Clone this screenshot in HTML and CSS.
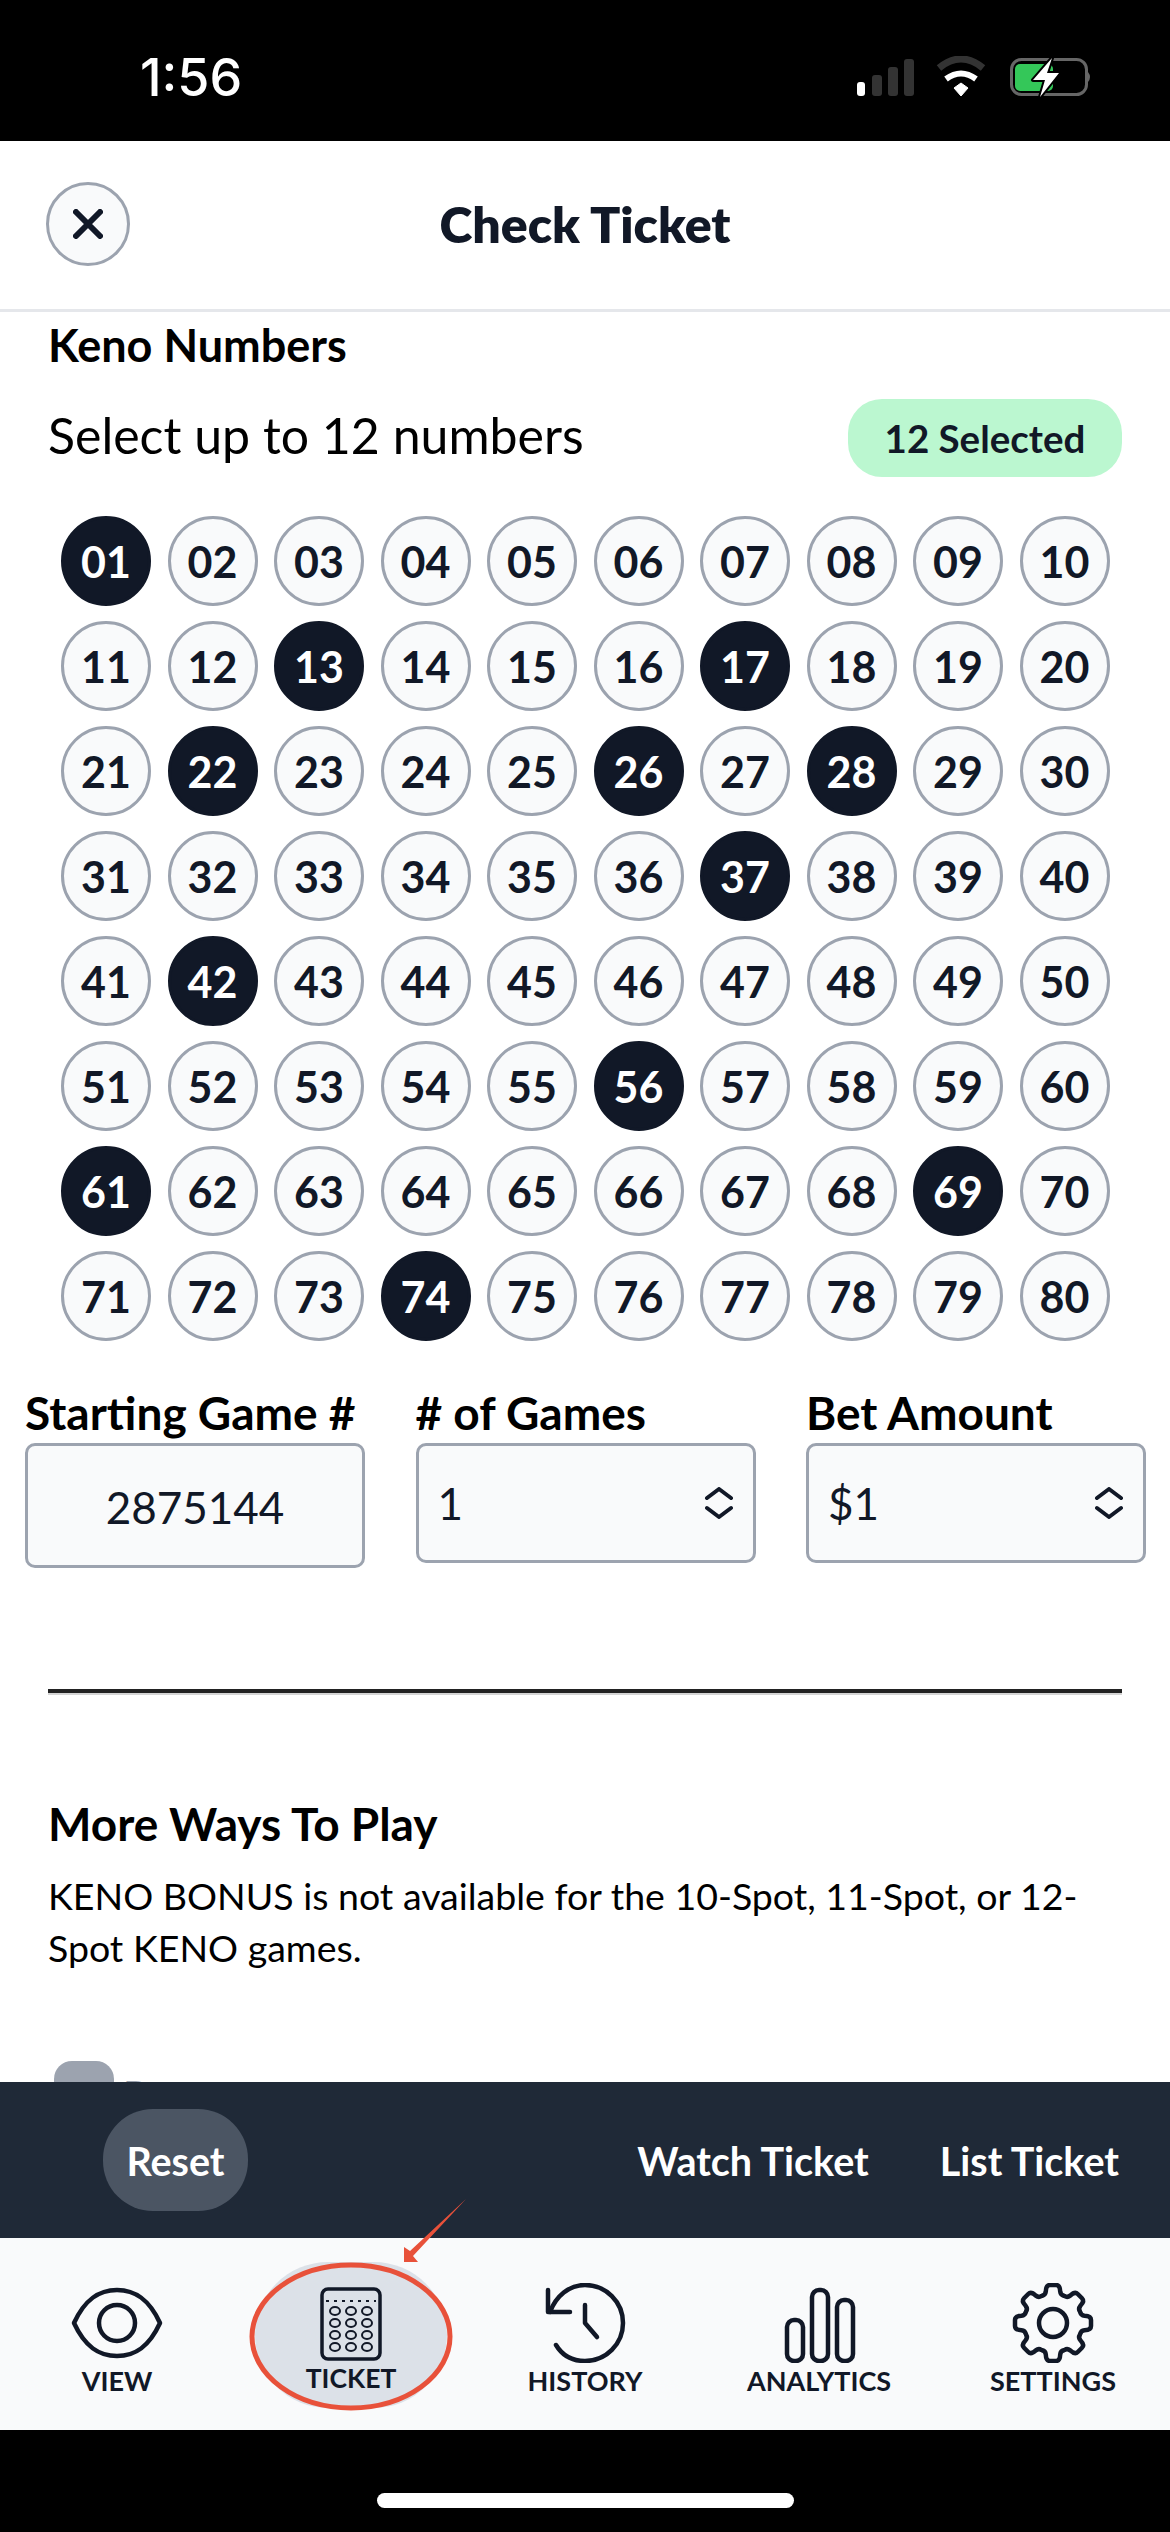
FILE: index.html
```html
<!DOCTYPE html>
<html lang="en">
<head>
  <meta charset="UTF-8" />
  <meta name="viewport" content="width=device-width, initial-scale=1.0"/>
  <title>Check Ticket</title>
  <link rel="stylesheet" href="styles.css">
</head>
<body>
  <div class="pagina">
    <!-- Status bar -->
    <div class="status">
      <span class="hora">1:56</span>
      <svg class="status-icones" width="240" height="44" viewBox="0 0 240 44">
        <rect x="2" y="26" width="8" height="14" rx="3" fill="#fff"/>
        <rect x="17" y="19" width="10" height="21" rx="3" fill="#333"/>
        <rect x="33" y="11" width="10" height="29" rx="3" fill="#333"/>
        <rect x="49" y="3" width="10" height="37" rx="3" fill="#333"/>
        <path d="M84 12Q106 -6 128 12" fill="none" stroke="#333" stroke-width="7"/>
        <path d="M91 23Q106 12 121 23" fill="none" stroke="#fff" stroke-width="6"/>
        <path d="M99 32L106 27L113 32L106 40Z" fill="#fff" stroke="#fff" stroke-linejoin="round"/>
        <rect x="156.500" y="3.500" width="75" height="35" rx="10" fill="none" stroke="#666" stroke-width="3"/>
        <rect x="160" y="8" width="38" height="27" rx="5" fill="#34c759"/>
        <path d="M233 16Q237 21 233 26Z" fill="#666"/>
        <path d="M197 2L178 24H190L185 41L204 17H192Z" fill="#fff" stroke="#000" stroke-width="4" paint-order="stroke" stroke-linejoin="round"/>
      </svg>
    </div>

    <!-- Header -->
    <div class="topo">
      <div class="fechar">
        <svg width="30" height="30" viewBox="0 0 30 30"><path d="M3 3L27 27M27 3L3 27" stroke="#111827" stroke-width="6" stroke-linecap="round"/></svg>
      </div>
      <div class="titulo">Check Ticket</div>
    </div>

    <!-- Scroll area -->
    <div class="conteudo">
      <div class="secao">Keno Numbers</div>
      <div class="linha-selecao">
        <span class="dica">Select up to 12 numbers</span>
        <span class="selo">12 Selected</span>
      </div>

      <div class="numeros">
        <div class="num on">01</div><div class="num">02</div><div class="num">03</div><div class="num">04</div><div class="num">05</div><div class="num">06</div><div class="num">07</div><div class="num">08</div><div class="num">09</div><div class="num">10</div>
        <div class="num">11</div><div class="num">12</div><div class="num on">13</div><div class="num">14</div><div class="num">15</div><div class="num">16</div><div class="num on">17</div><div class="num">18</div><div class="num">19</div><div class="num">20</div>
        <div class="num">21</div><div class="num on">22</div><div class="num">23</div><div class="num">24</div><div class="num">25</div><div class="num on">26</div><div class="num">27</div><div class="num on">28</div><div class="num">29</div><div class="num">30</div>
        <div class="num">31</div><div class="num">32</div><div class="num">33</div><div class="num">34</div><div class="num">35</div><div class="num">36</div><div class="num on">37</div><div class="num">38</div><div class="num">39</div><div class="num">40</div>
        <div class="num">41</div><div class="num on">42</div><div class="num">43</div><div class="num">44</div><div class="num">45</div><div class="num">46</div><div class="num">47</div><div class="num">48</div><div class="num">49</div><div class="num">50</div>
        <div class="num">51</div><div class="num">52</div><div class="num">53</div><div class="num">54</div><div class="num">55</div><div class="num on">56</div><div class="num">57</div><div class="num">58</div><div class="num">59</div><div class="num">60</div>
        <div class="num on">61</div><div class="num">62</div><div class="num">63</div><div class="num">64</div><div class="num">65</div><div class="num">66</div><div class="num">67</div><div class="num">68</div><div class="num on">69</div><div class="num">70</div>
        <div class="num">71</div><div class="num">72</div><div class="num">73</div><div class="num on">74</div><div class="num">75</div><div class="num">76</div><div class="num">77</div><div class="num">78</div><div class="num">79</div><div class="num">80</div>
      </div>

      <div class="campos">
        <div class="campo">
          <div class="rotulo">Starting Game #</div>
          <div class="caixa caixa-jogo">2875144</div>
        </div>
        <div class="campo">
          <div class="rotulo"># of Games</div>
          <div class="caixa caixa-select">
            <span>1</span>
            <svg width="30" height="32" viewBox="0 0 30 32"><path d="M3 11L15 2L27 11M3 21L15 30L27 21" fill="none" stroke="#111827" stroke-width="4" stroke-linecap="round" stroke-linejoin="round"/></svg>
          </div>
        </div>
        <div class="campo">
          <div class="rotulo">Bet Amount</div>
          <div class="caixa caixa-select">
            <span>$1</span>
            <svg width="30" height="32" viewBox="0 0 30 32"><path d="M3 11L15 2L27 11M3 21L15 30L27 21" fill="none" stroke="#111827" stroke-width="4" stroke-linecap="round" stroke-linejoin="round"/></svg>
          </div>
        </div>
      </div>

      <div class="divisor"></div>

      <div class="secao secao-mais">More Ways To Play</div>
      <p class="aviso">KENO BONUS is not available for the 10-Spot, 11-Spot, or 12-Spot KENO games.</p>

      <div class="opcao">
        <div class="chave"></div>
        <span class="opcao-texto">Bonus</span>
      </div>
    </div>

    <!-- Action bar -->
    <div class="acoes">
      <div class="reset">Reset</div>
      <div class="acao acao-watch">Watch Ticket</div>
      <div class="acao">List Ticket</div>
    </div>

    <!-- Bottom nav -->
    <div class="nav">
      <div class="item">
        <svg width="92" height="80" viewBox="0 0 92 80">
          <path d="M3 40C14 16 28 7 46 7C64 7 78 16 89 40C78 64 64 73 46 73C28 73 14 64 3 40Z" fill="none" stroke="#111827" stroke-width="4.500" stroke-linejoin="round"/>
          <circle cx="46" cy="40" r="18" fill="none" stroke="#111827" stroke-width="4.500"/>
        </svg>
        <span>VIEW</span>
      </div>
      <div class="item item-ativo">
        <svg width="62" height="74" viewBox="0 0 62 74">
          <rect x="2" y="2" width="58" height="70" rx="6" fill="none" stroke="#111827" stroke-width="3.500"/>
          <path d="M6 14H56" stroke="#111827" stroke-width="2" stroke-dasharray="3 5"/>
          <g fill="none" stroke="#111827" stroke-width="2">
            <ellipse cx="15" cy="24" rx="5" ry="4"/><ellipse cx="31" cy="24" rx="5" ry="4"/><ellipse cx="47" cy="24" rx="5" ry="4"/>
            <ellipse cx="15" cy="36" rx="5" ry="4"/><ellipse cx="31" cy="36" rx="5" ry="4"/><ellipse cx="47" cy="36" rx="5" ry="4"/>
            <ellipse cx="15" cy="48" rx="5" ry="4"/><ellipse cx="31" cy="48" rx="5" ry="4"/><ellipse cx="47" cy="48" rx="5" ry="4"/>
            <ellipse cx="15" cy="60" rx="5" ry="4"/><ellipse cx="31" cy="60" rx="5" ry="4"/><ellipse cx="47" cy="60" rx="5" ry="4"/>
          </g>
        </svg>
        <span>TICKET</span>
      </div>
      <div class="item">
        <svg width="92" height="80" viewBox="0 0 92 80" fill="none" stroke="#111827" stroke-width="4.500" stroke-linecap="round" stroke-linejoin="round">
          <path d="M11 29C17 13 30 2 46 2C67 2 84 19 84 40C84 61 67 78 46 78C33 78 23 72 17 62"/>
          <path d="M9 7V29H31"/>
          <path d="M46 22V40L58 54"/>
        </svg>
        <span>HISTORY</span>
      </div>
      <div class="item">
        <svg width="92" height="80" viewBox="0 0 92 80" fill="none" stroke="#111827" stroke-width="4.500">
          <rect x="14" y="37" width="16" height="41" rx="7"/>
          <rect x="39" y="7" width="16" height="71" rx="7"/>
          <rect x="64" y="17" width="16" height="61" rx="7"/>
        </svg>
        <span>ANALYTICS</span>
      </div>
      <div class="item">
        <svg width="92" height="80" viewBox="-46 -40 92 80" fill="none" stroke="#111827" stroke-width="4.500" stroke-linecap="round" stroke-linejoin="round">
          <defs>
            <path id="dente" d="M-10.700 -27.300C-8.500 -27.800 -7.500 -29 -7.200 -31.500Q-7 -38 -3 -38H3Q7 -38 7.200 -31.500C7.500 -29 8.500 -27.800 10.700 -27.300"/>
          </defs>
          <use href="#dente"/>
          <use href="#dente" transform="rotate(45)"/>
          <use href="#dente" transform="rotate(90)"/>
          <use href="#dente" transform="rotate(135)"/>
          <use href="#dente" transform="rotate(180)"/>
          <use href="#dente" transform="rotate(225)"/>
          <use href="#dente" transform="rotate(270)"/>
          <use href="#dente" transform="rotate(315)"/>
          <circle r="14"/>
        </svg>
        <span>SETTINGS</span>
      </div>
    </div>

    <!-- Home indicator -->
    <div class="home">
      <div class="home-barra"></div>
    </div>

    <!-- Marcacao vermelha por cima da tela -->
    <svg class="marcacao" width="240" height="230" viewBox="0 0 240 230">
      <ellipse cx="111" cy="146.500" rx="99" ry="71.500" fill="none" stroke="#e8513a" stroke-width="5"/>
      <path d="M226 9L170 61L164 57V72H178L173 66Z" fill="#e8513a"/>
    </svg>
  </div>
</body>
</html>
```

FILE: styles.css
```css
* {
  margin: 0;
  padding: 0;
  box-sizing: border-box;
  font-family: Lato, "Open Sans", sans-serif;
}

body {
  background: #000;
  color: #111827;
}

.pagina {
  position: relative;
  width: 1170px;
  height: 2532px;
  display: flex;
  flex-direction: column;
  overflow: hidden;
  background: #fff;
}

.status {
  height: 141px;
  flex-shrink: 0;
  background: #000;
  display: flex;
  justify-content: space-between;
  align-items: center;
  padding: 0 75px 0 140px;
}

.hora {
  font-family: Inter, sans-serif;
  font-size: 52px;
  font-weight: 500;
  color: #fff;
  line-height: 60px;
  margin-top: 15px;
}

.status-icones {
  margin-top: 15px;
}

.topo {
  height: 171px;
  flex-shrink: 0;
  display: grid;
  grid-template-columns: 1fr auto 1fr;
  align-items: center;
  padding-left: 46px;
  padding-bottom: 3px;
  border-bottom: 3px solid #e5e7eb;
}

.fechar {
  width: 84px;
  height: 84px;
  border-radius: 50%;
  background: #f9fafb;
  border: 3px solid #9ca3af;
  display: flex;
  justify-content: center;
  align-items: center;
}

.titulo {
  font-size: 50px;
  font-weight: 800;
  margin-left: -46px;
}

.conteudo {
  flex: 1;
  overflow: hidden;
}

.secao {
  font-size: 45px;
  font-weight: 700;
  line-height: 48px;
  color: #000;
  margin-top: 9px;
  padding-left: 48px;
}

.linha-selecao {
  height: 78px;
  margin: 30px 48px 0;
  display: flex;
  justify-content: space-between;
  align-items: center;
}

.dica {
  font-size: 50px;
  line-height: 60px;
  margin-top: -6px;
  color: #000;
}

.selo {
  width: 274px;
  height: 78px;
  border-radius: 34px;
  background: #bbf7d0;
  display: flex;
  justify-content: center;
  align-items: center;
  font-size: 38.5px;
  font-weight: 700;
}

.numeros {
  display: grid;
  grid-template-columns: repeat(10, 90px);
  column-gap: 16.5px;
  row-gap: 15px;
  margin-top: 39px;
  padding-left: 61px;
}

.num {
  height: 90px;
  border-radius: 50%;
  border: 3px solid #9ca3af;
  background: #f9fafb;
  display: flex;
  justify-content: center;
  align-items: center;
  font-size: 43px;
  font-weight: 700;
}

.num.on {
  background: #111827;
  border-color: #111827;
  color: #fff;
}

.campos {
  display: grid;
  grid-template-columns: repeat(3, 340px);
  column-gap: 50.5px;
  align-items: start;
  margin-top: 48px;
  padding-left: 25px;
}

.rotulo {
  font-size: 46px;
  font-weight: 700;
  line-height: 48px;
  color: #000;
  margin-bottom: 6px;
  white-space: nowrap;
}

.caixa {
  border: 3px solid #9ca3af;
  border-radius: 10px;
  background: #f9fafb;
  font-size: 44px;
}

.caixa-jogo {
  height: 125px;
  line-height: 123px;
  text-align: center;
}

.caixa-select {
  height: 120px;
  display: flex;
  justify-content: space-between;
  align-items: center;
  padding: 0 19px 0 19px;
}

.divisor {
  height: 6px;
  margin: 121px 48px 0;
  background: #222;
  border-bottom: 2px solid #d4d4d4;
}

.secao-mais {
  font-size: 46px;
  margin-top: 105px;
}

.aviso {
  font-size: 37.5px;
  line-height: 52px;
  color: #000;
  margin-top: 22px;
  padding: 0 48px;
}

.opcao {
  display: flex;
  gap: 9px;
  margin-top: 87px;
  padding-left: 54px;
}

.chave {
  width: 60px;
  height: 42px;
  border-radius: 18px;
  background: #9ca3af;
}

.opcao-texto {
  font-size: 38px;
  line-height: 46px;
  margin-top: 10px;
  color: #9ca3af;
}

.acoes {
  height: 156px;
  flex-shrink: 0;
  background: #1f2937;
  display: flex;
  align-items: center;
  padding: 0 51px 0 103px;
}

.reset {
  width: 145px;
  height: 102px;
  border-radius: 50px;
  background: #4b5563;
  color: #fff;
  font-size: 39.5px;
  font-weight: 700;
  display: flex;
  justify-content: center;
  align-items: center;
}

.acao {
  color: #fff;
  font-size: 39.5px;
  font-weight: 700;
}

.acao-watch {
  margin-left: auto;
  margin-right: 71px;
}

.nav {
  height: 192px;
  flex-shrink: 0;
  background: #f9fafb;
  display: grid;
  grid-template-columns: repeat(5, 234px);
  align-items: start;
  padding-top: 24px;
}

.item {
  display: flex;
  flex-direction: column;
  align-items: center;
  padding-top: 21px;
  font-size: 27px;
  font-weight: 700;
  line-height: 36px;
}

.item-ativo {
  width: 192px;
  height: 146px;
  justify-self: center;
  padding-top: 25px;
  border-radius: 90px;
  background: #dce1e8;
  font-size: 26.5px;
}

.item-ativo span {
  margin-top: -1px;
}

.home {
  height: 102px;
  flex-shrink: 0;
  background: #000;
  display: flex;
  justify-content: center;
  padding-top: 63px;
}

.home-barra {
  width: 417px;
  height: 15px;
  border-radius: 8px;
  background: #fff;
}

/* anotacao sobre a imagem */
.marcacao {
  position: absolute;
  left: 240px;
  top: 2190px;
}
```
